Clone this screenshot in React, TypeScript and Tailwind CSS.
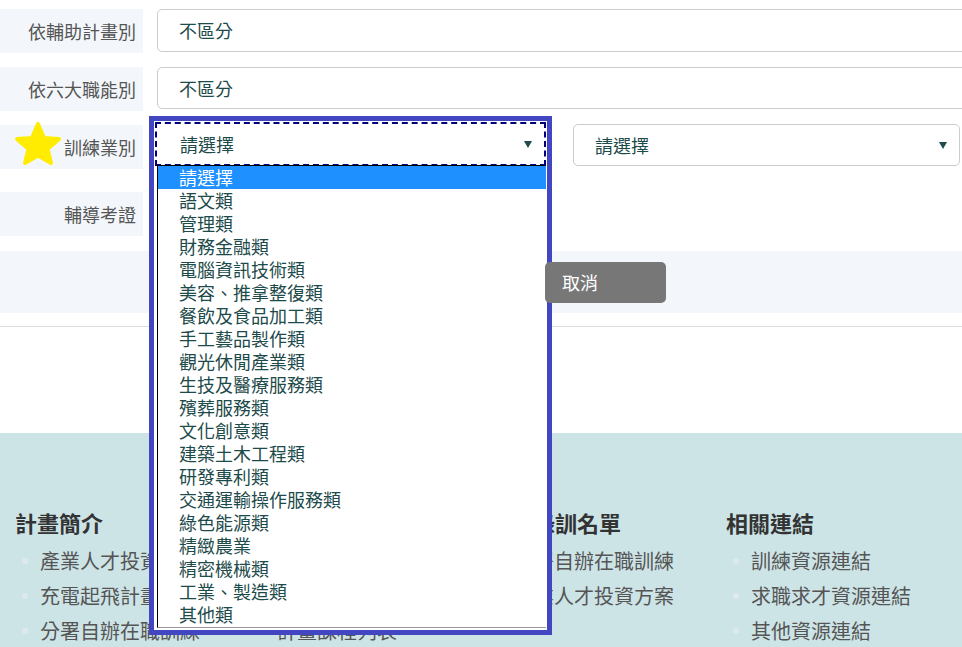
import React from "react";

const FONT = { fontFamily: '"Noto Sans CJK TC", "Noto Sans", sans-serif' };

const categories = [
  "請選擇",
  "語文類",
  "管理類",
  "財務金融類",
  "電腦資訊技術類",
  "美容、推拿整復類",
  "餐飲及食品加工類",
  "手工藝品製作類",
  "觀光休閒產業類",
  "生技及醫療服務類",
  "殯葬服務類",
  "文化創意類",
  "建築土木工程類",
  "研發專利類",
  "交通運輸操作服務類",
  "綠色能源類",
  "精緻農業",
  "精密機械類",
  "工業、製造類",
  "其他類",
];

const footerCols = [
  { title: "計畫簡介", items: ["產業人才投資方案", "充電起飛計畫", "分署自辦在職訓練"] },
  { title: "課程查詢", items: ["產業人才投資方案", "分署自辦在職訓練", "計畫課程列表"] },
  { title: "公告錄訓名單", items: ["分署自辦在職訓練", "產業人才投資方案"] },
  { title: "相關連結", items: ["訓練資源連結", "求職求才資源連結", "其他資源連結"] },
];

function Label({ children, star }: { children: React.ReactNode; star?: boolean }) {
  return (
    <div className="relative w-[143px] h-[44px] shrink-0 bg-[#f3f7fb] flex items-center justify-end pr-[7px] text-[18px] text-[#555]">
      {star && (
        <svg className="absolute left-[13px] top-[-4px]" width="50" height="46" viewBox="0 0 50 46">
          <path
            d="M25 3 L31 17 L46 18 L34.5 28 L38 42 L25 34.5 L12 42 L15.5 28 L4 18 L19 17 Z"
            fill="#ffec00"
            stroke="#ffec00"
            strokeWidth="4"
            strokeLinejoin="round"
          />
        </svg>
      )}
      <span className="relative">{children}</span>
    </div>
  );
}

function Arrow() {
  return (
    <svg width="8" height="8" viewBox="0 0 8 8" className="shrink-0">
      <path d="M0 1 H8 L4 8 Z" fill="#1d4a4a" />
    </svg>
  );
}

export default function App() {
  return (
    <div className="w-[962px] h-[647px] overflow-hidden bg-white relative" style={FONT}>
      {/* form */}
      <div className="pt-[9px]">
        <div className="flex items-start gap-[14px]">
          <Label>依輔助計畫別</Label>
          <div className="w-[830px] h-[43px] shrink-0 border border-[#ccc] rounded-[5px] flex items-center pl-[21px] text-[18px] text-[#1d4a4a]">
            不區分
          </div>
        </div>

        <div className="flex items-start gap-[14px] mt-[14px]">
          <Label>依六大職能別</Label>
          <div className="w-[830px] h-[42px] shrink-0 border border-[#ccc] rounded-[5px] flex items-center pl-[21px] text-[18px] text-[#1d4a4a]">
            不區分
          </div>
        </div>

        <div className="flex items-start mt-[14px]">
          <Label star>訓練業別</Label>
          <div className="relative ml-[14px] mt-[-1px] w-[389px] h-[42px] shrink-0">
            <div className="w-full h-full border border-[#ccc] rounded-[5px] flex items-center justify-between pl-[21px] pr-[12px] text-[18px] text-[#1d4a4a]">
              請選擇
              <Arrow />
            </div>

            {/* annotated open dropdown */}
            <div className="absolute left-[-8px] top-[-8px] w-[403px] h-[519px] border-[5px] border-[#4247c1] bg-white z-10">
              <div className="absolute left-[1px] top-[1px] w-[391px] h-[44px] border-2 border-dashed border-[#00007a] flex items-center justify-between pl-[23px] pr-[12px] text-[18px] text-[#1d4a4a]">
                請選擇
                <Arrow />
              </div>
              <div className="absolute left-[3px] top-[44px] w-[389px] h-[463px] border-l border-t border-black border-b-[#9a9a9a] border-b bg-white">
                {categories.map((c, i) => (
                  <div
                    key={c}
                    className={
                      i === 0
                        ? "h-[23px] leading-[23px] pl-[21px] text-[18px] bg-[#1e90ff] text-white"
                        : "h-[23px] leading-[23px] pl-[21px] text-[18px] text-[#1d4a4a]"
                    }
                  >
                    {c}
                  </div>
                ))}
              </div>
            </div>
          </div>
          <div className="ml-[27px] mt-[-1px] w-[387px] h-[42px] shrink-0 border border-[#ccc] rounded-[5px] flex items-center justify-between pl-[21px] pr-[12px] text-[18px] text-[#1d4a4a]">
            請選擇
            <Arrow />
          </div>
        </div>

        <div className="flex items-start mt-[23px]">
          <Label>輔導考證</Label>
        </div>

        {/* buttons */}
        <div className="mt-[15px] h-[62px] bg-[#f3f7fb] flex items-center gap-[15px] pl-[410px]">
          <button className="w-[120px] h-[41px] rounded-[5px] bg-[#1f7a8c] text-white text-[18px]">查詢</button>
          <button className="relative z-20 w-[121px] h-[41px] rounded-[5px] bg-[#777] text-white text-[18px] text-left pl-[17px]">
            取消
          </button>
        </div>

        <div className="mt-[13px] border-t border-[#ddd]" />
      </div>

      {/* footer */}
      <div className="mt-[106px] bg-[#cde4e7] pt-[74px] px-[15px] flex h-[300px]">
        {footerCols.map((col) => (
          <div key={col.title} className="w-[237px] shrink-0">
            <div className="text-[22px] font-bold leading-[30px] text-[#333]">{col.title}</div>
            <ul className="mt-[6px]">
              {col.items.map((it) => (
                <li key={it} className="flex items-center h-[35px] text-[20px] text-[#555]">
                  <span className="w-[6px] h-[6px] rounded-full bg-[#dde9ea] ml-[7px] mr-[12px]" />
                  {it}
                </li>
              ))}
            </ul>
          </div>
        ))}
      </div>
    </div>
  );
}
